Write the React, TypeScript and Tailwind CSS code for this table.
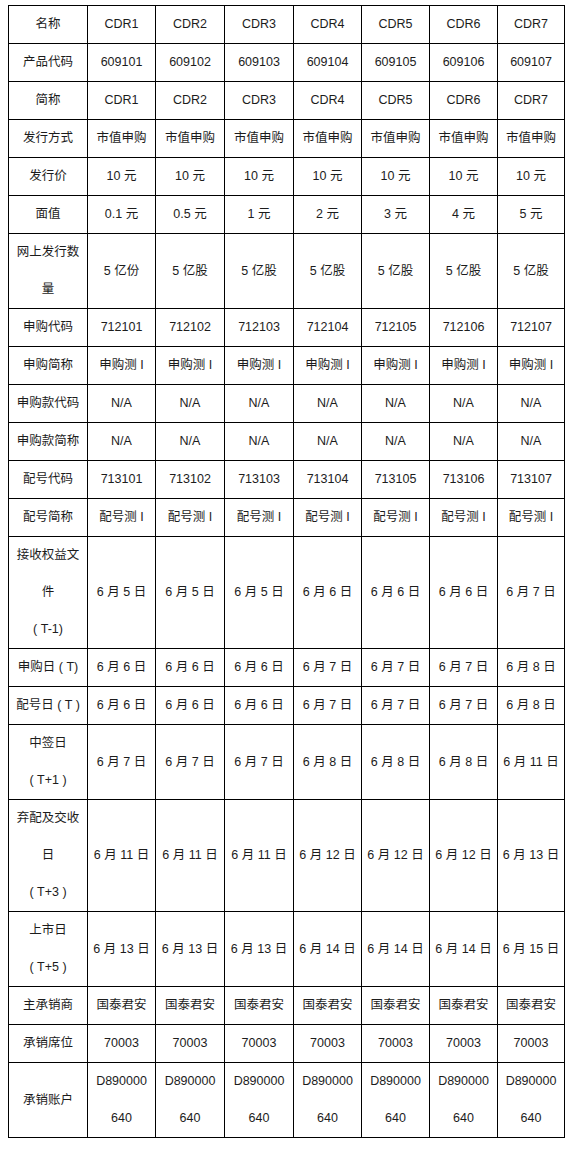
import React from "react";

type Row = { label: string; values: string[] };

const same = (v: string) => Array(7).fill(v);
const seq = (prefix: string) => [1, 2, 3, 4, 5, 6, 7].map((n) => `${prefix}${n}`);
const dates = (a: string, b: string, c: string) => [a, a, a, b, b, b, c];

const rows: Row[] = [
    { label: "名称", values: seq("CDR") },
    { label: "产品代码", values: seq("60910") },
    { label: "简称", values: seq("CDR") },
    { label: "发行方式", values: same("市值申购") },
    { label: "发行价", values: same("10 元") },
    { label: "面值", values: ["0.1 元", "0.5 元", "1 元", "2 元", "3 元", "4 元", "5 元"] },
    { label: "网上发行数\n量", values: ["5 亿份", ...Array(6).fill("5 亿股")] },
    { label: "申购代码", values: seq("71210") },
    { label: "申购简称", values: same("申购测 I") },
    { label: "申购款代码", values: same("N/A") },
    { label: "申购款简称", values: same("N/A") },
    { label: "配号代码", values: seq("71310") },
    { label: "配号简称", values: same("配号测 I") },
    { label: "接收权益文\n件\n( T-1)", values: dates("6 月 5 日", "6 月 6 日", "6 月 7 日") },
    { label: "申购日 ( T)", values: dates("6 月 6 日", "6 月 7 日", "6 月 8 日") },
    { label: "配号日 ( T )", values: dates("6 月 6 日", "6 月 7 日", "6 月 8 日") },
    { label: "中签日\n( T+1 )", values: dates("6 月 7 日", "6 月 8 日", "6 月 11 日") },
    { label: "弃配及交收\n日\n( T+3 )", values: dates("6 月 11 日", "6 月 12 日", "6 月 13 日") },
    { label: "上市日\n( T+5 )", values: dates("6 月 13 日", "6 月 14 日", "6 月 15 日") },
    { label: "主承销商", values: same("国泰君安") },
    { label: "承销席位", values: same("70003") },
    { label: "承销账户", values: same("D890000\n640") },
];

const widths = ["w-[79px]", "w-[68px]", "w-[69px]", "w-[69px]", "w-[68px]", "w-[68px]", "w-[68px]", "w-[67px]"];

export default function App() {
    return (
        <div className="min-h-[1153px] w-[573px] bg-white pt-[5px] pl-[8px] font-['Liberation_Sans','Noto_Sans_CJK_SC',sans-serif] text-[12.5px] text-[#1c1c1c]">
            <table className="w-[557px] table-fixed border-collapse">
                <colgroup>
                    {widths.map((w, i) => (
                        <col key={i} className={w} />
                    ))}
                </colgroup>
                <tbody>
                    {rows.map((row) => (
                        <tr key={row.label}>
                            <td className="border border-black px-[4px] text-center align-middle leading-[37px] whitespace-pre-line">
                                {row.label}
                            </td>
                            {row.values.map((v, i) => (
                                <td
                                    key={i}
                                    className="border border-black px-[2px] text-center align-middle leading-[37px] whitespace-pre-line"
                                >
                                    {v}
                                </td>
                            ))}
                        </tr>
                    ))}
                </tbody>
            </table>
        </div>
    );
}
